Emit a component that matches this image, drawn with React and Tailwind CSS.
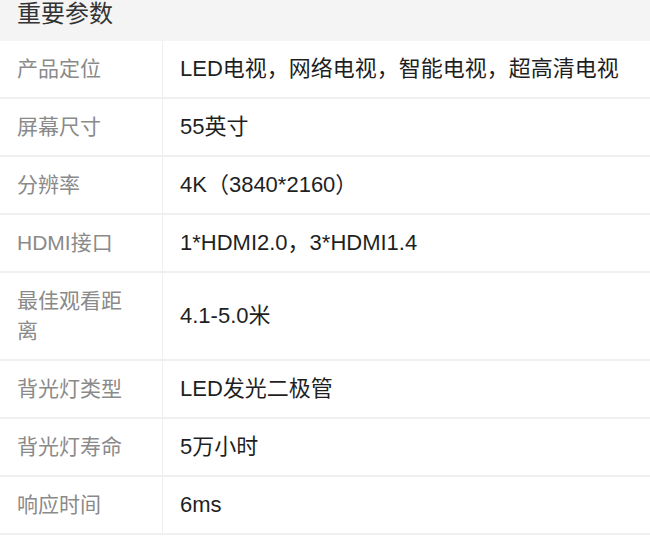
const rows = [
  { label: '产品定位', value: 'LED电视，网络电视，智能电视，超高清电视' },
  { label: '屏幕尺寸', value: '55英寸' },
  { label: '分辨率', value: '4K（3840*2160）' },
  { label: 'HDMI接口', value: '1*HDMI2.0，3*HDMI1.4' },
  { label: '最佳观看距离', value: '4.1-5.0米' },
  { label: '背光灯类型', value: 'LED发光二极管' },
  { label: '背光灯寿命', value: '5万小时' },
  { label: '响应时间', value: '6ms' },
]

export default function App() {
  return (
    <div className="w-[650px] h-[542px] bg-white overflow-hidden font-['Liberation_Sans','Noto_Sans_CJK_SC',sans-serif]">
      {/* header */}
      <div className="h-[41px] bg-[#f4f4f4] pl-[17px]">
        <h2 className="text-[24px] leading-[28px] text-[#333]">重要参数</h2>
      </div>

      {/* spec table */}
      <div>
        {rows.map(r => (
          <div key={r.label} className="flex border-b-[2px] border-[#f0f0f0]">
            <div className="w-[163px] shrink-0 border-r border-[#eeeeee] pl-[17px] pr-[30px] py-[13px] text-[21px] leading-[30px] text-[#8a8a8a]">
              {r.label}
            </div>
            <div className="flex-1 flex items-center pl-[17px] text-[22px] leading-[30px] text-[#1f1f1f]">
              {r.value}
            </div>
          </div>
        ))}
      </div>
    </div>
  )
}
